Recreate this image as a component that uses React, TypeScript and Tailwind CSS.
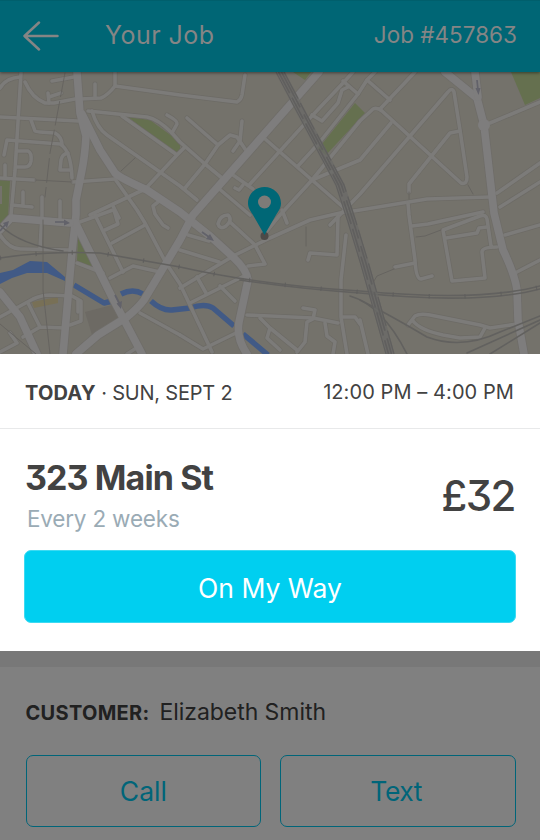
const minorRoads = [
  'M0 117L78 121', 'M21 73L15 171L11 215', 'M0 88Q6 78 20 77', 'M25 82Q32 98 45 103L54 103L75 99',
  'M48 93L49 103M49 97L61 93', 'M52 81L74 77', 'M95 84V98',
  'M80 99L101 98Q108 95 115 86L180 95L237 102Q241 100 242 95L245 75', 'M115 86V72',
  'M31 120L35 131Q36 132 55 133Q62 137 62 145', 'M4 155L7 140L60 144Q71 150 72 178',
  'M17 151H28Q32 153 31 161Q30 167 25 167H16', 'M68 153Q62 154 61 160L60 170H70', 'M5 165V177',
  'M0 178L34 180', 'M73 182L115 179', 'M23 192V205M12 205L32 207', 'M42 197V215L40 248', 'M60 201V219',
  'M88 111L147 117Q158 119 172 133L180 142L205 164L222 178',
  'M92 111Q97 128 107 135L160 172L180 186L197 200', 'M122 116L177 155L147 187M177 155L185 147',
  'M167 115Q178 121 177 124L172 133', 'M115 179L137 210L145 223L166 263L180 284L212 352',
  'M90 215L143 190', 'M113 206L119 218', 'M158 202L153 206L155 214L163 225L168 228',
  'M187 118L218 145L205 164L185 188', 'M242 121L240 141L233 151', 'M218 145L230 135L237 137L245 149',
  'M264 138L312 180L343 207', 'M250 184L280 151L310 118L343 83L353 72', 'M298 166L319 143L358 94L367 80L375 72',
  'M343 81L358 94', 'M312 115L322 121L338 103L342 90L348 87', 'M380 109L415 72', 'M367 80L390 100',
  'M266 232L280 215L312 180L360 121L373 109Q377 107 382 111L461 183Q467 185 467 177L460 130L454 92Q452 87 448 92L360 194L330 225',
  'M312 180L360 160L391 123', 'M460 131L450 133L409 184V192',
  'M180 288L235 255L270 238L310 220L340 213L360 210L427 199L490 197',
  'M408 203L409 215L415 260Q416 279 421 279L432 276', 'M412 226L428 224L483 212',
  'M491 246L487 219Q486 214 480 216L443 230L452 281L485 278L482 252Q482 247 497 247',
  'M446 238L477 233L479 228L487 227', 'M497 193L540 163', 'M500 207L540 182', 'M505 235L540 225',
  'M515 273L540 260', 'M395 267L415 263', 'M408 325L415 316Q420 313 430 315L480 325L490 328L517 324',
  'M413 321Q420 330 443 335L460 338L480 337L485 328', 'M360 320L368 354',
  'M230 222L255 245L265 264L248 266', 'M218 224Q220 215 228 215Q233 220 226 226Q220 230 218 224',
  'M338 216L337 255L310 253L308 260', 'M346 235L341 280L341 317L347 354', 'M247 315L313 318L338 323',
  'M303 308L315 310L313 319L307 322L305 342L297 352', 'M260 318L270 328L267 338L280 350M270 328L297 350',
  'M325 323L327 336L335 342L333 354', 'M342 317L355 317L360 324', 'M180 250L219 262', 'M190 303L246 275',
  'M197 277L206 293', 'M220 286L235 301', 'M180 335L203 349L238 332', 'M282 210L287 223', 'M188 235L209 241',
  'M217 187L250 215', 'M233 175L253 189', 'M243 185L239 190L235 188', 'M0 235Q10 250 22 249L70 250',
  'M77 223L113 210', 'M95 215L123 272', 'M105 230L118 224L114 210', 'M112 243L145 225',
  'M110 278L133 266L160 272', 'M77 263L103 273', 'M0 317L33 299Q42 295 50 295L72 296L81 301V321L70 325',
  'M28 303L40 327L66 328M40 327L23 337', 'M78 300V312', 'M140 313L180 335', 'M10 333L17 343L0 352',
  'M127 354L138 347', 'M490 123L540 102',
]

const majorRoads = [
  'M77 72L80 113L86 136Q85 155 82 170L76 200L76 215L72 252L63 354',
  'M82 114L100 150L115 173Q120 178 147 190L180 212L210 236L233 257Q247 270 248 280L239 322Q236 338 247 354',
  'M319 72L193 215L180 240L144 300Q138 308 127 317L98 335L76 354',
  'M75 222L112 297L142 354', 'M0 292L20 317L37 354', 'M0 230L11 218L70 223',
  'M445 72L477 98L484 125L494 213L503 250Q515 275 517 290L518 320L524 354', 'M475 72L478 97',
]

const trackLines = [
  'M0 258Q43 251 100 253L180 267Q260 285 360 291Q480 302 540 286', 'M240 280Q300 289 360 293Q480 305 540 289',
  'M360 300Q390 315 427 337Q462 350 500 332L540 316', 'M467 353L540 320', 'M490 354L540 323',
  'M350 296Q382 305 407 354', 'M0 225Q20 245 63 251',
]

const mainLine = 'M280 72L300 110L340 185L352 222L365 265L390 354'

function Roads({ paths, stroke, width }: { paths: string[]; stroke: string; width: number }) {
  return (
    <g stroke={stroke} strokeWidth={width}>
      {paths.map((d) => <path key={d} d={d} />)}
    </g>
  )
}

function StreetMap() {
  return (
    <svg viewBox="0 72 540 282" className="block h-[282px] w-full bg-[#74726b]" fill="none" strokeLinecap="round" strokeLinejoin="round">
      <g fill="#65704f">
        <path d="M128 117L150 120L180 142V150L175 153Z" />
        <path d="M0 180H10L8 218L0 226ZM0 186V204H2V186Z" fillRule="evenodd" />
        <path d="M78 238L95 267L77 262Z" />
        <path d="M293 72H311L305 80Z" />
        <path d="M355 103L365 113L326 155L318 149Z" />
        <path d="M511 72H540V98L525 105Z" />
      </g>
      <path d="M32 302L58 297V303L34 308Z" fill="#787056" />
      <path d="M85 312L112 305L125 317L92 335Z" fill="#6d6a64" />
      <path d="M0 273L13 270L30 261L47 262L65 277V281L47 273H27L12 278L0 284Z" fill="#415a86" />
      <g stroke="#415a86" strokeWidth="5.5" strokeLinecap="butt">
        <path d="M74 285L104 303L113 301" />
        <path d="M121 294Q133 288 143 294" />
        <path d="M151 301Q162 311 172 310L190 308Q205 303 213 308L234 326" />
        <path d="M243 334L268 355" />
      </g>
      <Roads paths={minorRoads} stroke="#6d6b66" width={5} />
      <Roads paths={majorRoads} stroke="#6f6d69" width={9.2} />
      <Roads paths={minorRoads} stroke="#7c7b79" width={3.6} />
      <Roads paths={majorRoads} stroke="#7e7d7d" width={7.6} />
      <circle cx="484" cy="125" r="6" fill="#7e7d7d" />
      <Roads paths={trackLines} stroke="#62615f" width={1.6} />
      <path d="M0 258Q43 251 100 253L180 267Q260 285 360 292Q480 303 540 287" stroke="#5f5e5d" strokeWidth="4.5" strokeDasharray="1 35" strokeLinecap="butt" />
      <g strokeLinecap="butt">
        <path d={mainLine} stroke="#6a6967" strokeWidth="9" opacity=".75" />
        <path d={mainLine} stroke="#605f5e" strokeWidth="1" transform="translate(-4)" />
        <path d={mainLine} stroke="#605f5e" strokeWidth="1.6" strokeDasharray="24 5" transform="translate(-1.5)" />
        <path d={mainLine} stroke="#605f5e" strokeWidth="1.6" strokeDasharray="40 8" transform="translate(1.5)" />
        <path d={mainLine} stroke="#605f5e" strokeWidth="1.2" strokeDasharray="30 5" transform="translate(4)" />
      </g>
      <g stroke="#64625f" strokeWidth=".9">
        <path d="M65 73L50 153L45 197" strokeDasharray="24 5" />
        <path d="M43 220V290L50 354M35 180L72 182M135 158L121 171M0 324L36 354M306 227V246M468 185L473 194M416 237L425 236L441 230M394 269L377 276L374 281M409 192V199" />
      </g>
      <g stroke="#62626a" strokeWidth="1.7" fill="#62626a" strokeLinecap="butt" strokeLinejoin="miter">
        <path d="M55 222H64M202 232L209 237M115 295L119 303M0 231L5 225M477 80L478 90" />
        <path d="M64 219.500L70 223L64 225.500ZM206 239L214 241L210 234ZM116.500 303.500L121 309L122 301ZM3 223L9 221L7 228ZM475.500 88L478.500 95L480.500 88Z" stroke="none" />
      </g>
      <circle cx="264.500" cy="236" r="4" fill="#4c4a48" />
      <path d="M264.500 187C255.300 187 248 194.200 248 203.200C248 208 250.500 211 252.400 214.100L264.500 235L276.600 214.100C278.500 211 281 208 281 203.200C281 194.200 273.700 187 264.500 187Z" fill="#006776" />
      <circle cx="264.500" cy="202" r="6.500" fill="#7d7b78" />
    </svg>
  )
}

export default function App() {
  return (
    <main className="flex h-[840px] w-[540px] flex-col overflow-hidden bg-[#808080] font-['Inter',sans-serif] text-[#424242] [font-feature-settings:'cv09']">
      <header className="z-10 flex h-[72px] shrink-0 items-center border-t border-[#005f6c] bg-[#006675] pr-[23px] pb-[3px] pl-[23px] text-[#858585] shadow-[0_1px_3px_rgba(0,0,0,0.45)]">
        <svg className="mt-0.5 h-[30px] w-9" viewBox="0 0 36 30" fill="none" stroke="currentColor" strokeWidth="2.500" strokeLinecap="round" strokeLinejoin="round">
          <path d="M16 1.500L1.500 15L16 28.500M2 15H34.500" />
        </svg>
        <h1 className="ml-[46px] text-[25px] leading-8 tracking-[0.45px]">Your Job</h1>
        <span className="ml-auto text-[22.5px] leading-8">Job #457863</span>
      </header>

      <div className="shrink-0"><StreetMap /></div>

      <section className="h-[297px] shrink-0 bg-white">
        <div className="flex h-[75px] items-center justify-between border-b border-[#e8e9ea] pr-[26px] pl-[25px] text-xl">
          <div className="pt-1"><strong className="font-bold tracking-[0.2px]">TODAY</strong><span className="tracking-[-0.2px]"> · SUN, SEPT 2</span></div>
          <time className="pt-0.5 tracking-[0.08px]">12:00 PM – 4:00 PM</time>
        </div>
        <div className="flex h-[121px] justify-between px-[25px]">
          <div className="pt-[27px]">
            <h2 className="text-[34px] leading-[44px] font-bold tracking-[-0.9px]">323 Main St</h2>
            <p className="pl-0.5 text-[22.5px] leading-[37px] tracking-[-0.2px] text-[#9aabb5]">Every 2 weeks</p>
          </div>
          <div className="pt-[42px] text-[42px] leading-[50px] font-medium tracking-[-1.5px]">£32</div>
        </div>
        <button className="mx-6 block h-[73px] w-[492px] rounded-[7px] border border-[#3ddaf2] bg-[#00cff0] pt-1 text-[26.5px] text-white">On My Way</button>
      </section>

      <section className="flex grow flex-col border-t-[16px] border-[#787878] bg-[#808080] pr-6 pl-[25.5px]">
        <p className="flex h-[88px] items-center gap-2.5 pt-[3px] text-[#212121]">
          <strong className="text-xl font-bold tracking-[0.3px]">CUSTOMER:</strong>
          <span className="text-[23px] tracking-[-0.05px]">Elizabeth Smith</span>
        </p>
        <div className="grid grid-cols-2 gap-[19px] text-[26.5px] text-[#006579]">
          <button className="h-[72px] rounded-[7px] border-[1.5px] border-[#006579] pt-0.5">Call</button>
          <button className="h-[72px] rounded-[7px] border-[1.5px] border-[#006579] pt-0.5 pr-1 tracking-[-0.5px]">Text</button>
        </div>
      </section>
    </main>
  )
}
